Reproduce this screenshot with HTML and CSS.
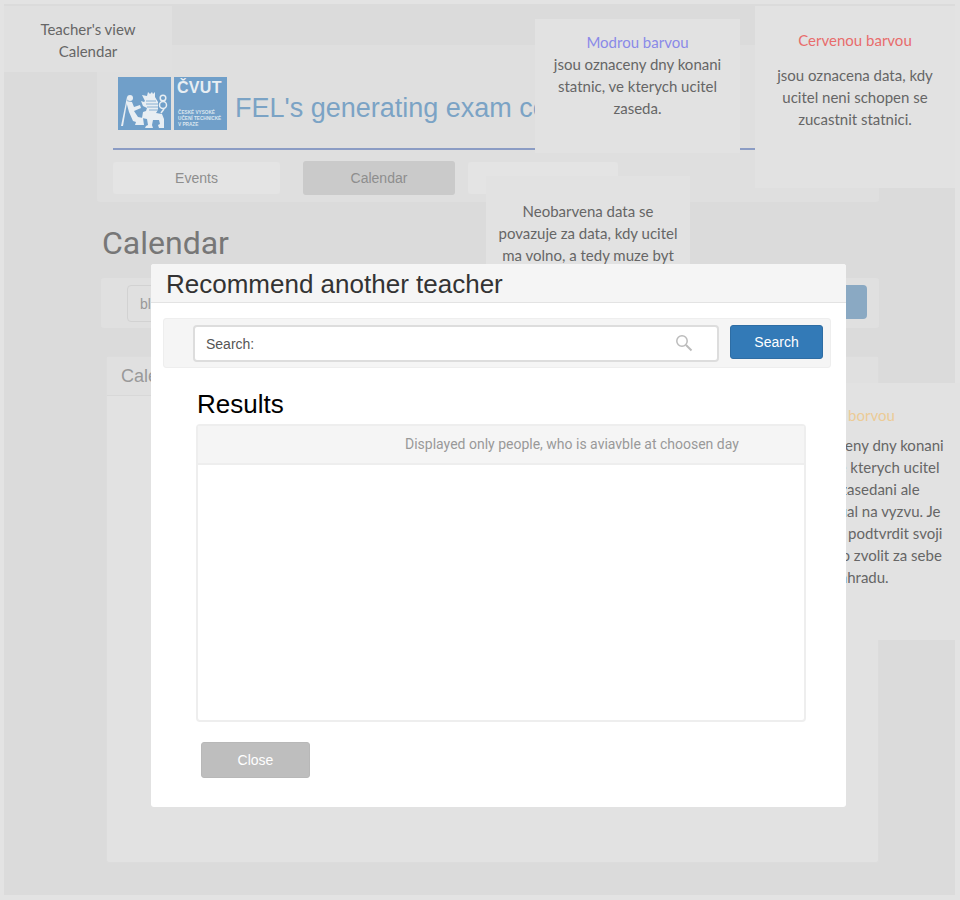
FILE: index.html
```html
<html>
<head>
  <title>Teacher's view Calendar</title>
  <link rel="stylesheet" href="styles.css">
</head>
<body>

  <div id="screen">
    <div class="header">
      <div class="brand">
        <svg class="logo" width="109" height="53" viewBox="0 0 109 53">
          <rect x="0" y="0" width="53" height="53" fill="#709fc9"/>
          <rect x="56" y="0" width="53" height="53" fill="#709fc9"/>
          <!-- man with compass -->
          <g fill="#e8eef3">
            <path d="M3 49l6-29 1 0-5 29z"/>
            <circle cx="12" cy="21" r="3"/>
            <path d="M8 24l6 1 2 5 6-2 1 3-7 3 4 6 5 1 1 7h-9l1-3-3-1-4-9z"/>
          </g>
          <!-- lion -->
          <g fill="#e8eef3">
            <path d="M24 18l5 1 1-4 2 2 2-2 1 2 2-2 0 5 3 5v8l-2 3 6 1 2 5v9h-5l-1-3 2-1-1-4-6 0-1 5 1 3h-8l1-2 2-1-1-6-5-1 1-6 3-1 1-3-4-2-2-5 3 1 1-1z"/>
          </g>
          <g stroke="#709fc9" stroke-width="0.800" fill="none">
            <path d="M28 24l10 0M28 27l12 0M29 30l11 0M31 33l9 0"/>
          </g>
          <!-- tail -->
          <g stroke="#e8eef3" stroke-width="1.500" fill="none">
            <circle cx="45" cy="21" r="2.800"/>
            <circle cx="45" cy="28" r="3.500"/>
            <path d="M43 36l3-4"/>
          </g>
          <text class="logo-big" x="59" y="16">ČVUT</text>
          <text class="logo-small" x="60" y="37">ČESKÉ VYSOKÉ</text>
          <text class="logo-small" x="60" y="43">UČENÍ TECHNICKÉ</text>
          <text class="logo-small" x="60" y="48.500">V PRAZE</text>
        </svg>
        <span class="app-title">FEL's generating exam committees</span>
      </div>
      <div class="nav">
        <a class="tab tab-events">Events</a>
        <a class="tab tab-active">Calendar</a>
        <a class="tab tab-last"></a>
      </div>
    </div>

    <h1 class="page-title">Calendar</h1>

    <div class="filter-bar">
      <div class="filter-input">bl</div>
      <div class="filter-button"></div>
    </div>

    <div class="calendar-panel">
      <div class="calendar-heading">Calendar</div>
    </div>
  </div>

  <div class="note note-view">
    <p>Teacher's view<br>Calendar</p>
  </div>

  <div class="note note-blue">
    <p class="note-color blue">Modrou barvou</p>
    <p>jsou oznaceny dny konani<br>statnic, ve kterych ucitel<br>zaseda.</p>
  </div>

  <div class="note note-red">
    <p class="note-color red">Cervenou barvou</p>
    <p class="spaced">jsou oznacena data, kdy<br>ucitel neni schopen se<br>zucastnit statnici.</p>
  </div>

  <div class="note note-plain">
    <p>Neobarvena data se<br>povazuje za data, kdy ucitel<br>ma volno, a tedy muze byt</p>
  </div>

  <div class="note note-orange">
    <p class="note-color orange">Zlutou borvou</p>
    <p>jsou oznaceny dny konani<br>statnic, ve kterych ucitel<br>nema zasedani ale<br>je individual na vyzvu. Je<br>ucitel mel' podtvrdit svoji<br>ucast nebo zvolit za sebe<br>nahradu.</p>
  </div>

  <div class="modal">
    <div class="modal-header">Recommend another teacher</div>
    <div class="modal-body">
      <div class="search-well">
        <div class="search-input">
          <span>Search:</span>
          <svg width="18" height="18" viewBox="0 0 18 18" fill="none" stroke="#bbb">
            <circle cx="7" cy="7" r="5.200" stroke-width="1.500"/>
            <path d="M11 11l5.500 5.500" stroke-width="2"/>
          </svg>
        </div>
        <button class="btn btn-primary">Search</button>
      </div>
      <div class="results">
        <h2>Results</h2>
        <div class="results-panel">
          <div class="results-head">Displayed only people, who is aviavble at choosen day</div>
        </div>
        <button class="btn btn-close">Close</button>
      </div>
    </div>
  </div>

</body>
</html>
```

FILE: styles.css
```css
html, body {
  margin: 0;
  padding: 0;
}

body {
  width: 960px;
  height: 900px;
  overflow: hidden;
  background-color: #e3e3e3;
  font-family: 'Liberation Sans', Arial, sans-serif;
}

#screen {
  width: 951px;
  height: 891px;
  margin: 4px 0 0 4px;
  padding-top: 41px;
  box-sizing: border-box;
  background-color: #dbdbdb;
}

.header {
  width: 782px;
  height: 157px;
  margin-left: 93px;
  padding: 32px 14px 0 16px;
  box-sizing: border-box;
  background-color: #dfdfdf;
  border-radius: 3px;
}

.brand {
  display: flex;
  align-items: center;
  gap: 8px;
  height: 73px;
  padding-left: 5px;
  padding-bottom: 18px;
  box-sizing: border-box;
  border-bottom: 2px solid #8b9cc4;
}

.logo {
  flex: none;
}

.logo-big {
  font-size: 16px;
  font-weight: bold;
  fill: #e8eef3;
  letter-spacing: 0.3px;
}

.logo-small {
  font-size: 4.700px;
  font-weight: bold;
  fill: #dbe6ef;
}

.app-title {
  margin-top: 9px;
  font-size: 27px;
  color: #7ba3c5;
  white-space: nowrap;
}

.nav {
  display: flex;
  align-items: center;
  height: 34px;
  margin-top: 11px;
}

.tab {
  display: block;
  height: 32px;
  line-height: 32px;
  text-align: center;
  font-size: 14px;
  color: #8e8e8e;
  background-color: #e4e4e4;
  border-radius: 3px;
}

.tab-events {
  width: 167px;
  margin-right: 23px;
}

.tab-active {
  width: 152px;
  height: 34px;
  line-height: 34px;
  margin-right: 13px;
  background-color: #cacaca;
}

.tab-last {
  width: 150px;
}

.page-title {
  height: 38px;
  margin: 22px 0 0 98px;
  font-family: Roboto, sans-serif;
  font-size: 32px;
  font-weight: 400;
  line-height: 38px;
  color: #777;
}

.filter-bar {
  display: flex;
  justify-content: space-between;
  width: 778px;
  height: 50px;
  margin: 16px 0 0 97px;
  padding: 7px 12px 0 26px;
  box-sizing: border-box;
  background-color: #e0e0e0;
  border-radius: 3px;
}

.filter-input {
  width: 300px;
  height: 37px;
  padding-left: 12px;
  box-sizing: border-box;
  font-size: 14px;
  line-height: 37px;
  color: #999;
  border: 1px solid #d2d2d2;
  border-radius: 4px;
}

.filter-button {
  width: 120px;
  height: 34px;
  background-color: #8aa9c3;
  border-radius: 4px;
}

.calendar-panel {
  width: 773px;
  height: 507px;
  margin: 28px 0 0 102px;
  box-sizing: border-box;
  background-color: #e2e2e2;
  border: 1px solid #dcdcdc;
  border-radius: 3px;
}

.calendar-heading {
  height: 38px;
  padding-left: 14px;
  font-size: 18px;
  line-height: 38px;
  color: #999;
  background-color: #e0e0e0;
  border-bottom: 1px solid #d8d8d8;
}

/* sticky notes lie over the page */
.note {
  position: absolute;
  box-sizing: border-box;
  background-color: #e2e2e2;
  font-family: Lato, sans-serif;
  font-size: 15px;
  line-height: 22px;
  color: #666;
  text-align: center;
  white-space: nowrap;
}

.note p {
  margin: 0;
}

.note .spaced {
  margin-top: 13px;
}

.blue {
  color: #8a8ae8;
}

.red {
  color: #e86c6c;
}

.orange {
  color: #eccb96;
}

.note-view {
  left: 4px;
  top: 6px;
  width: 168px;
  height: 66px;
  padding-top: 12px;
  background-color: #e0e0e0;
}

.note-blue {
  left: 535px;
  top: 19px;
  width: 205px;
  height: 134px;
  padding-top: 12px;
}

.note-red {
  left: 755px;
  top: 6px;
  width: 200px;
  height: 182px;
  padding-top: 23px;
}

.note-plain {
  left: 486px;
  top: 176px;
  width: 204px;
  height: 100px;
  padding-top: 24px;
}

.note-orange {
  left: 765px;
  top: 383px;
  width: 195px;
  height: 257px;
  padding: 21px 5px 0 0;
}

.note-orange .note-color {
  padding-right: 24px;
}

.note-orange p:last-child {
  margin-top: 8px;
}

/* dialog */
.modal {
  position: absolute;
  left: 151px;
  top: 264px;
  width: 695px;
  height: 543px;
  background-color: #fff;
  border-radius: 3px;
}

.modal-header {
  height: 39px;
  padding: 1px 0 0 15px;
  box-sizing: border-box;
  font-size: 26px;
  line-height: 39px;
  color: #333;
  background-color: #f5f5f5;
  border-bottom: 1px solid #e3e3e3;
  border-radius: 3px 3px 0 0;
}

.modal-body {
  padding: 15px 15px 0 12px;
}

.search-well {
  display: flex;
  align-items: flex-start;
  gap: 11px;
  width: 668px;
  height: 50px;
  padding: 6px 7px 0 29px;
  box-sizing: border-box;
  background-color: #f5f5f5;
  border: 1px solid #eee;
  border-radius: 3px;
}

.search-input {
  display: flex;
  align-items: center;
  justify-content: space-between;
  width: 526px;
  height: 37px;
  padding: 0 24px 2px 11px;
  box-sizing: border-box;
  font-size: 14px;
  color: #555;
  background-color: #fff;
  border: 2px solid #ddd;
  border-radius: 4px;
}

.search-input span {
  margin-top: 2px;
}

.btn {
  display: block;
  font-family: 'Liberation Sans', Arial, sans-serif;
  font-size: 14px;
  color: #fff;
  border-radius: 3px;
}

.btn-primary {
  width: 93px;
  height: 34px;
  background-color: #337ab7;
  border: 1px solid #2e6da4;
}

.results {
  margin-left: 33px;
}

.results h2 {
  height: 56px;
  margin: 0;
  padding-left: 1px;
  font-size: 26px;
  font-weight: 400;
  line-height: 72px;
  color: #000;
}

.results-panel {
  width: 610px;
  height: 298px;
  box-sizing: border-box;
  border: 2px solid #eee;
  border-radius: 4px;
}

.results-head {
  height: 39px;
  padding-left: 207px;
  box-sizing: border-box;
  font-family: Roboto, sans-serif;
  font-size: 14px;
  line-height: 36px;
  color: #999;
  background-color: #f5f5f5;
  border-bottom: 2px solid #eee;
}

.btn-close {
  width: 109px;
  height: 36px;
  margin: 20px 0 0 5px;
  background-color: #bebebe;
  border: 1px solid #b8b8b8;
}
```
